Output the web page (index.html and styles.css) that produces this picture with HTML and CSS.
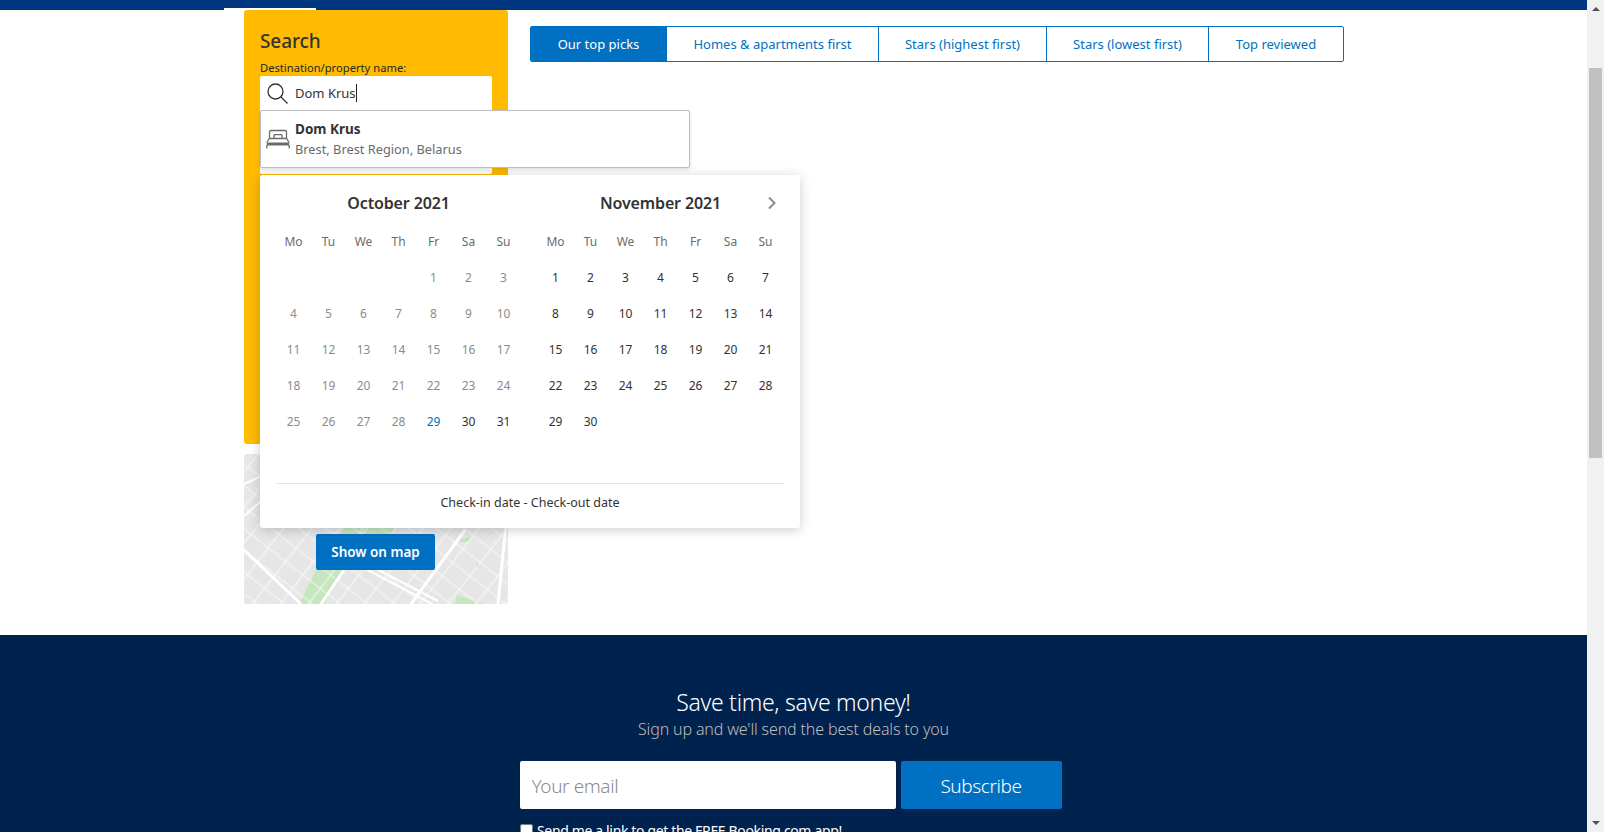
FILE: index.html
```html
<!DOCTYPE html>
<html lang="en">

<head>
    <meta charset="UTF-8">
    <title>Search results</title>
    <link rel="stylesheet" href="styles.css">
</head>

<body>
    <div class="page">
        <div class="topbar">
            <div class="topbar-tab"></div>
        </div>

        <div class="content">
            <aside class="sidebar">
                <form class="search">
                    <h2>Search</h2>
                    <label class="search-label" for="destination">Destination/property name:</label>
                    <div class="search-input">
                        <svg class="search-icon" width="24" height="24" viewBox="0 0 24 24" fill="none" stroke="#333" stroke-width="1.3">
                            <circle cx="10.5" cy="10.5" r="7.5" />
                            <path d="M16 16l6.5 6.5" />
                        </svg>
                        <span id="destination" class="search-value">Dom Krus</span><span class="caret"></span>
                    </div>

                    <div class="suggestions">
                        <svg class="bed-icon" width="24" height="20" viewBox="0 0 24 20" fill="none" stroke="#6b6b6b" stroke-width="1.3">
                            <path d="M3.5 9.5V3q0-1.5 1.5-1.5h14q1.500 0 1.500 1.500v6.500" />
                            <path d="M8 9.500V6.500q0-.8.8-.8h6.400q.8 0 .8.8v3" />
                            <path d="M.8 13.500L3.500 9.500h17l2.700 4" />
                            <path d="M.8 15h22.400" stroke-width="3" />
                            <path d="M.8 16v3.500M23.200 16v3.500" />
                        </svg>
                        <div>
                            <div class="suggestion-name">Dom Krus</div>
                            <div class="suggestion-place">Brest, Brest Region, Belarus</div>
                        </div>
                    </div>

                    <div class="calendar">
                        <div class="months">
                            <div class="month">
                                <div class="month-title">October 2021</div>
                                <div class="days">
                                    <span class="dow">Mo</span><span class="dow">Tu</span><span class="dow">We</span><span class="dow">Th</span><span class="dow">Fr</span><span class="dow">Sa</span><span class="dow">Su</span>
                                    <span></span><span></span><span></span><span></span>
                                    <span class="past">1</span><span class="past">2</span><span class="past">3</span>
                                    <span class="past">4</span><span class="past">5</span><span class="past">6</span><span class="past">7</span><span class="past">8</span><span class="past">9</span><span class="past">10</span>
                                    <span class="past">11</span><span class="past">12</span><span class="past">13</span><span class="past">14</span><span class="past">15</span><span class="past">16</span><span class="past">17</span>
                                    <span class="past">18</span><span class="past">19</span><span class="past">20</span><span class="past">21</span><span class="past">22</span><span class="past">23</span><span class="past">24</span>
                                    <span class="past">25</span><span class="past">26</span><span class="past">27</span><span class="past">28</span><span class="today">29</span><span>30</span><span>31</span>
                                </div>
                            </div>
                            <div class="month">
                                <div class="month-title">November 2021</div>
                                <svg class="next" width="10" height="14" viewBox="0 0 10 14" fill="none" stroke="#8c8c8c" stroke-width="2">
                                    <path d="M2 1.500L7.500 7 2 12.500" />
                                </svg>
                                <div class="days">
                                    <span class="dow">Mo</span><span class="dow">Tu</span><span class="dow">We</span><span class="dow">Th</span><span class="dow">Fr</span><span class="dow">Sa</span><span class="dow">Su</span>
                                    <span>1</span><span>2</span><span>3</span><span>4</span><span>5</span><span>6</span><span>7</span>
                                    <span>8</span><span>9</span><span>10</span><span>11</span><span>12</span><span>13</span><span>14</span>
                                    <span>15</span><span>16</span><span>17</span><span>18</span><span>19</span><span>20</span><span>21</span>
                                    <span>22</span><span>23</span><span>24</span><span>25</span><span>26</span><span>27</span><span>28</span>
                                    <span>29</span><span>30</span>
                                </div>
                            </div>
                        </div>
                        <div class="calendar-foot">Check-in date - Check-out date</div>
                    </div>
                </form>

                <div class="map">
                    <svg class="map-art" width="264" height="150" viewBox="0 0 264 150" fill="none" stroke="#fff">
                        <defs>
                            <pattern id="streets-a" width="22" height="150" patternUnits="userSpaceOnUse" patternTransform="rotate(38)">
                                <path d="M11 0V150" stroke="#fff" stroke-width="1" stroke-opacity="0.8" />
                            </pattern>
                            <pattern id="streets-b" width="150" height="17" patternUnits="userSpaceOnUse" patternTransform="rotate(38)">
                                <path d="M0 8H150" stroke="#fff" stroke-width="1" stroke-opacity="0.7" />
                            </pattern>
                        </defs>
                        <path d="M55 150L72 116H100L80 150Z" fill="#c6e6c0" stroke="none" />
                        <path d="M100 74H117L112 84H96Z" fill="#c6e6c0" stroke="none" />
                        <path d="M120 74H150L147 82H118Z" fill="#c6e6c0" stroke="none" />
                        <path d="M213 141L240 150H211Z" fill="#c6e6c0" stroke="none" />
                        <path d="M215 85L227 83L224 88H216Z" fill="#c6e6c0" stroke="none" />
                        <path d="M232 109h3v5h-3z" fill="#c6e6c0" stroke="none" />
                        <rect width="264" height="150" fill="url(#streets-a)" stroke="none" />
                        <rect width="264" height="150" fill="url(#streets-b)" stroke="none" />
                        <path d="M0 96L57 150M100 116L77 150M221 76L167 150M262 70L254 150" stroke-width="3" />
                        <path d="M120 114L188 150M123 110L194 147M0 30L40 12M0 62L32 34" stroke-width="2" />
                    </svg>
                    <button class="map-button" type="button">Show on map</button>
                </div>
            </aside>

            <div class="tabs">
                <a class="tab active">Our top picks</a>
                <a class="tab">Homes &amp; apartments first</a>
                <a class="tab">Stars (highest first)</a>
                <a class="tab">Stars (lowest first)</a>
                <a class="tab">Top reviewed</a>
            </div>
        </div>

        <footer class="newsletter">
            <h2>Save time, save money!</h2>
            <p>Sign up and we'll send the best deals to you</p>
            <div class="newsletter-form">
                <input type="text" placeholder="Your email">
                <button type="button">Subscribe</button>
            </div>
            <label class="newsletter-check">
                <input type="checkbox">
                Send me a link to get the FREE Booking.com app!
            </label>
        </footer>
    </div>

    <div class="scrollbar">
        <div class="arrow-up"></div>
        <div class="thumb"></div>
        <div class="arrow-down"></div>
    </div>
</body>

</html>
```

FILE: styles.css
```css
* {
    padding: 0;
    margin: 0;
    box-sizing: border-box;
}

html,
body {
    height: 100%;
    overflow: hidden;
}

body {
    display: flex;
    background-color: #fff;
    color: #333;
    font-family: "Noto Sans", sans-serif;
}

.page {
    flex: 1;
    display: flex;
    flex-direction: column;
    min-width: 0;
}

.topbar {
    height: 10px;
    flex-shrink: 0;
    background-color: #003580;
    padding: 8px 0 0 224px;
}

.topbar-tab {
    width: 92px;
    height: 2px;
    background-color: #fff;
}

.content {
    height: 625px;
    flex-shrink: 0;
    display: flex;
    align-items: flex-start;
    padding-left: 244px;
}

.sidebar {
    width: 264px;
    margin-right: 22px;
    flex-shrink: 0;
}

/* search box */
.search {
    position: relative;
    height: 434px;
    padding: 20px 16px 0;
    background-color: #febb02;
    border-radius: 3px;
}

.search h2 {
    font-size: 19px;
    line-height: 23px;
    font-weight: 500;
    letter-spacing: -0.1px;
    color: #333;
}

.search-label {
    display: block;
    margin-top: 7px;
    font-size: 11.2px;
    line-height: 16px;
    color: #262626;
}

.search-input {
    display: flex;
    align-items: center;
    width: 232px;
    height: 98px;
    padding: 0 0 64px 5px;
    background-color: #fff;
    border-radius: 2px;
    font-size: 13px;
}

.search-icon {
    margin-right: 6px;
}

.search-value {
    color: #333;
}

.caret {
    width: 1px;
    height: 18px;
    background-color: #262626;
}

/* autocomplete */
.suggestions {
    position: absolute;
    top: 100px;
    left: 16px;
    width: 430px;
    height: 58px;
    display: flex;
    align-items: center;
    gap: 5px;
    padding-left: 5px;
    background-color: #fff;
    border: 1px solid #bdbdbd;
    border-radius: 2px;
    box-shadow: 0 2px 4px rgba(0, 0, 0, 0.12);
    z-index: 2;
}

.suggestion-name {
    font-size: 13.5px;
    line-height: 20px;
    font-weight: 700;
}

.suggestion-place {
    font-size: 12.8px;
    line-height: 20px;
    color: #6b6b6b;
}

/* calendar */
.calendar {
    position: absolute;
    top: 165px;
    left: 16px;
    width: 540px;
    height: 353px;
    padding: 16px 16px 0;
    background-color: #fff;
    border-radius: 3px;
    box-shadow: 0 2px 12px rgba(0, 0, 0, 0.2);
    z-index: 1;
}

.months {
    display: flex;
    gap: 17px;
    height: 292px;
}

.month {
    position: relative;
    width: 245px;
}

.month-title {
    height: 24px;
    line-height: 24px;
    text-align: center;
    font-size: 16px;
    font-weight: 600;
    letter-spacing: -0.15px;
}

.next {
    position: absolute;
    top: 5px;
    right: 6px;
}

.days {
    display: grid;
    grid-template-columns: repeat(7, 35px);
    grid-auto-rows: 36px;
    margin-top: 9px;
    font-size: 12px;
    text-align: center;
    line-height: 36px;
}

.dow {
    color: #6b6b6b;
}

.past {
    color: #8c8c8c;
}

.today {
    color: #0071c2;
}

.calendar-foot {
    height: 44px;
    line-height: 38px;
    border-top: 1px solid #e6e6e6;
    text-align: center;
    font-size: 12.5px;
}

/* map */
.map {
    position: relative;
    height: 150px;
    margin-top: 10px;
    display: flex;
    justify-content: center;
    align-items: flex-end;
    padding-bottom: 34px;
    background-color: #e6e6e6;
    border-radius: 3px;
    overflow: hidden;
}

.map-art {
    position: absolute;
    top: 0;
    left: 0;
}

.map-button {
    position: relative;
    width: 119px;
    height: 36px;
    margin-right: 1px;
    padding-bottom: 1px;
    border: 0;
    border-radius: 2px;
    background-color: #0071c2;
    color: #fff;
    font-family: inherit;
    font-size: 13.5px;
    font-weight: 600;
}

/* sort tabs */
.tabs {
    display: flex;
    width: 814px;
    height: 36px;
    margin-top: 16px;
    border: 1px solid #0071c2;
    border-radius: 2px;
    font-size: 13px;
}

.tab {
    display: flex;
    align-items: center;
    justify-content: center;
    padding-bottom: 1px;
    color: #0071c2;
    border-left: 1px solid #0071c2;
}

.tab:nth-child(1) {
    width: 135px;
    border-left: 0;
}

.tab:nth-child(2) {
    width: 212px;
}

.tab:nth-child(3) {
    width: 168px;
}

.tab:nth-child(4) {
    width: 162px;
}

.tab:nth-child(5) {
    width: 135px;
}

.tab.active {
    background-color: #0071c2;
    color: #fff;
}

/* newsletter */
.newsletter {
    flex: 1;
    display: flex;
    flex-direction: column;
    align-items: center;
    padding-top: 51px;
    background-color: #00224f;
    color: #fff;
}

.newsletter h2 {
    margin-bottom: 1px;
    font-size: 23px;
    line-height: 32px;
    font-weight: 300;
    letter-spacing: -0.3px;
}

.newsletter p {
    font-size: 16px;
    line-height: 20px;
    font-weight: 300;
    letter-spacing: -0.14px;
    color: #bdbdbd;
}

.newsletter-form {
    display: flex;
    gap: 5px;
    margin: 22px 6px 0 0;
    height: 48px;
}

.newsletter-form input {
    width: 376px;
    border: 0;
    border-radius: 2px;
    padding: 2px 12px 0;
    font-family: inherit;
    font-size: 19px;
    font-weight: 300;
    letter-spacing: -0.4px;
}

.newsletter-form input::placeholder {
    color: #8c8c8c;
}

.newsletter-form button {
    width: 161px;
    border: 0;
    border-radius: 2px;
    padding-top: 2px;
    background-color: #0071c2;
    color: #fff;
    font-family: inherit;
    font-size: 19px;
    font-weight: 300;
    letter-spacing: -0.4px;
}

.newsletter-check {
    align-self: flex-start;
    display: flex;
    align-items: center;
    gap: 4px;
    margin: 12px 0 0 520px;
    font-size: 14px;
    letter-spacing: -0.35px;
    white-space: nowrap;
}

.newsletter-check input {
    width: 13px;
    height: 13px;
}

/* fake window scrollbar */
.scrollbar {
    width: 17px;
    flex-shrink: 0;
    display: flex;
    flex-direction: column;
    align-items: center;
    background-color: #f1f1f1;
}

.arrow-up {
    margin-top: 7px;
    border: 4px solid transparent;
    border-top: 0;
    border-bottom: 4px solid #505050;
}

.thumb {
    width: 13px;
    height: 390px;
    margin-top: 57px;
    background-color: #c1c1c1;
}

.arrow-down {
    margin-top: auto;
    margin-bottom: 7px;
    border: 4px solid transparent;
    border-bottom: 0;
    border-top: 4px solid #505050;
}
```
